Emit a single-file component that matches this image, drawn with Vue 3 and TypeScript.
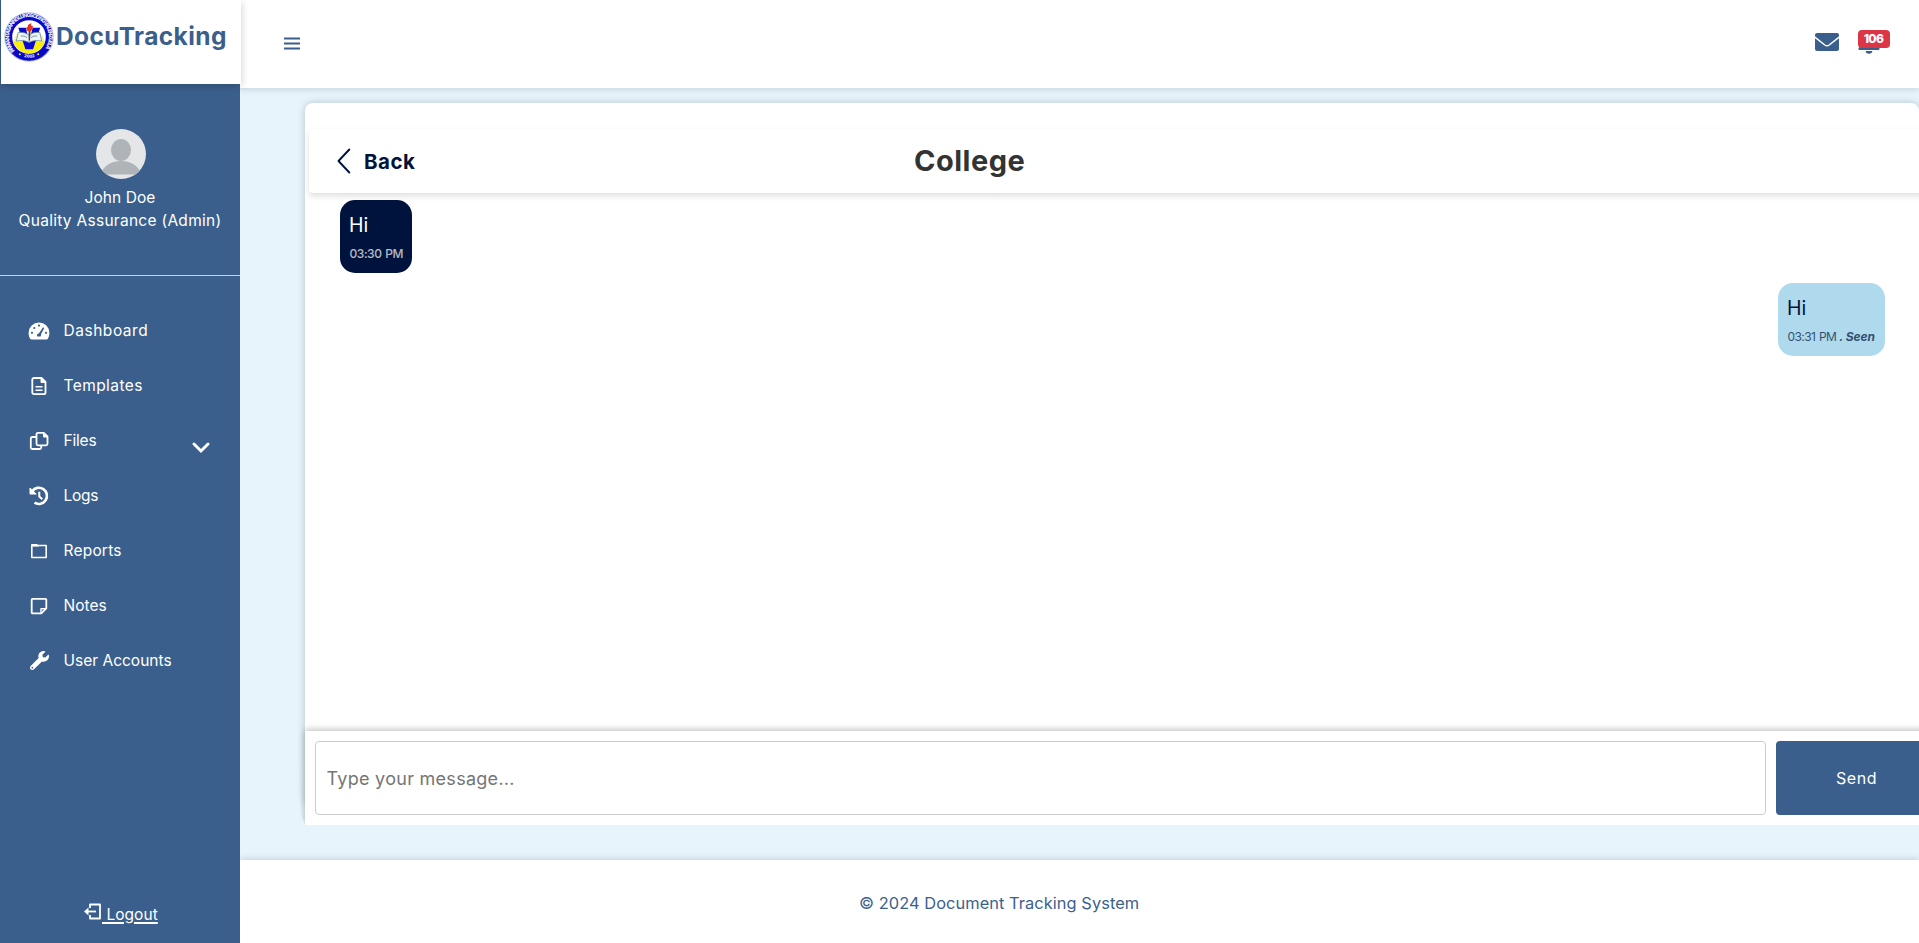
<script setup lang="ts">
import { ref } from 'vue'

interface MenuItem {
  label: string
  icon: string
  spacing: string
  expandable?: boolean
}

interface Message {
  id: number
  text: string
  time: string
  mine: boolean
  seen?: boolean
}

const menu: MenuItem[] = [
  { label: 'Dashboard', icon: 'gauge', spacing: '0.53px' },
  { label: 'Templates', icon: 'file', spacing: '0.43px' },
  { label: 'Files', icon: 'copy', spacing: '-0.2px', expandable: true },
  { label: 'Logs', icon: 'history', spacing: '-0.27px' },
  { label: 'Reports', icon: 'folder', spacing: '0.2px' },
  { label: 'Notes', icon: 'note', spacing: '0px' },
  { label: 'User Accounts', icon: 'wrench', spacing: '0px' },
]

const messages: Message[] = [
  { id: 1, text: 'Hi', time: '03:30 PM', mine: false },
  { id: 2, text: 'Hi', time: '03:31 PM', mine: true, seen: true },
]

const draft = ref('')
const unread = ref(106)
</script>

<template>
  <div class="app">
    <aside class="sidebar">
      <div class="brand">
        <svg class="seal" viewBox="0 0 98 98">
          <defs>
            <path id="ringTop" d="M21 76A39 39 0 1 1 77 76" />
            <path id="ringBottom" d="M30 85A43 43 0 0 0 68 85" />
          </defs>
          <circle cx="49" cy="49" r="48.5" fill="#b9bccb" />
          <circle cx="49" cy="49" r="46.5" fill="#0a08c8" />
          <circle cx="49" cy="49" r="33" fill="#fff" />
          <path d="M18 57h62a32 32 0 0 1-62 0z" fill="#f7ee10" />
          <path d="M18 57l8-16 10 4-4 14zM80 57l-8-16-10 4 4 14z" fill="#f6f0a0" />
          <path d="M28 31h15l6 29 7-29h15L57 73H42z" fill="#0a0ad2" />
          <path d="M28 40q12-2 21 5 9-7 21-5l4 17q-16-3-25 3-9-6-25-3z" fill="#eef4f6" stroke="#5f8294" stroke-width="1.5" />
          <path d="M49 45v15M33 47q7-1 12 3M65 47q-7-1-12 3" fill="none" stroke="#6f8f9d" stroke-width="1.8" />
          <path d="M48 36l4 0-1 20h-2z" fill="#554038" />
          <path d="M46 37q-5-5 1-9-1-4 7-6-3 5 3 6-1 6-4 9z" fill="#e5341c" />
          <text class="ring-text"><textPath href="#ringTop" textLength="176">PAMANTASAN NG LUNGSOD NG VALENZUELA</textPath></text>
          <text class="ring-year"><textPath href="#ringBottom" startOffset="10">2002</textPath></text>
          <circle cx="31" cy="83" r="2" fill="#f4ec50" />
          <circle cx="67" cy="83" r="2" fill="#f4ec50" />
        </svg>
        <span class="brand-name">DocuTracking</span>
      </div>

      <div class="profile">
        <svg class="avatar" viewBox="0 0 50 50">
          <defs><clipPath id="avatarClip"><circle cx="25" cy="25" r="25" /></clipPath></defs>
          <g clip-path="url(#avatarClip)">
            <rect width="50" height="50" fill="#e4e6e8" />
            <ellipse cx="25" cy="21" rx="10" ry="11" fill="#aeb4b8" />
            <path d="M4 45.500C8 36 16 32 25 32s17 4 21 13.500z" fill="#aeb4b8" />
          </g>
        </svg>
        <div class="name">John Doe</div>
        <div class="role">Quality Assurance (Admin)</div>
      </div>

      <nav class="menu">
        <a v-for="item in menu" :key="item.label" class="menu-item">
          <svg v-if="item.icon === 'gauge'" class="icon" viewBox="0 0 24 24">
            <path d="M12 3.500A10.400 10.400 0 0 0 1.600 14c0 2 .5 3.900 1.400 5.500.3.600.9.900 1.600.900h14.800c.7 0 1.300-.3 1.600-.9a11 11 0 0 0 1.400-5.500A10.400 10.400 0 0 0 12 3.500z" fill="#fff" />
            <g class="cut">
              <circle cx="12" cy="6.600" r="1.100" /><circle cx="7.300" cy="9" r="1.100" />
              <circle cx="5" cy="13.800" r="1.100" /><circle cx="19" cy="13.800" r="1.100" />
              <path d="M16 8.200l1.300.9-3.300 6.200c.2 1 0 1.700-.5 2.200h-3.300c-.6-1.500.1-3 1.800-3.200z" />
            </g>
          </svg>
          <svg v-else-if="item.icon === 'file'" class="icon line" viewBox="0 0 24 24">
            <path d="M7 4h7.500l4 4v10.500a1.700 1.700 0 0 1-1.700 1.700H7a1.700 1.700 0 0 1-1.700-1.700V5.700A1.700 1.700 0 0 1 7 4z" />
            <path d="M14 4v4.500h4.500z" fill="#fff" stroke-width="1" />
            <path d="M8.500 12.700h7M8.500 16.300h7" stroke-width="1.600" />
          </svg>
          <svg v-else-if="item.icon === 'copy'" class="icon line" viewBox="0 0 24 24">
            <path d="M11 3.800h5.800l3.700 3.700v7.300a1.500 1.500 0 0 1-1.500 1.500h-8a1.500 1.500 0 0 1-1.500-1.500V5.300A1.500 1.500 0 0 1 11 3.800z" />
            <path d="M16.500 4v4h4z" fill="#fff" stroke-width="1" />
            <path d="M9.500 8H5.300a1.500 1.500 0 0 0-1.500 1.500v9A1.500 1.500 0 0 0 5.300 20h7.400a1.500 1.500 0 0 0 1.500-1.500v-2" />
          </svg>
          <svg v-else-if="item.icon === 'history'" class="icon line" viewBox="0 0 24 24">
            <path d="M5.200 7.200A8.100 8.100 0 1 1 7.500 18.700" stroke-width="2.600" />
            <path d="M3 4v6h6.200z" fill="#fff" stroke-width="1" />
            <path d="M12.300 7.800v4.600l3 2.800" stroke-width="2" />
          </svg>
          <svg v-else-if="item.icon === 'folder'" class="icon line" viewBox="0 0 24 24">
            <path d="M4.800 6.500h14.400v12H4.800z" stroke-width="1.600" />
            <path d="M4.800 7V5.700h4.700l1.800 1.200H4.800z" fill="#fff" stroke-width="1.400" />
          </svg>
          <svg v-else-if="item.icon === 'note'" class="icon line" viewBox="0 0 24 24">
            <path d="M5.500 4.800h13a.8.8 0 0 1 .8.800v8.700l-5 5H5.500a.8.8 0 0 1-.8-.8V5.600a.8.8 0 0 1 .8-.8z" />
            <path d="M14 19v-4.300h5" stroke-width="1.400" />
          </svg>
          <svg v-else class="icon wrench" viewBox="0 0 512 512">
            <path fill="#fff" d="M507.730 109.100c-2.240-9.030-13.540-12.090-20.120-5.510l-74.360 74.360-67.880-11.310-11.310-67.880 74.360-74.360c6.620-6.620 3.430-17.900-5.660-20.160-47.380-11.740-99.550.91-136.580 37.930-39.640 39.640-50.550 97.100-34.050 147.200L18.740 402.760c-24.990 24.990-24.990 65.510 0 90.500 24.990 24.990 65.510 24.990 90.500 0l213.210-213.210c50.120 16.710 107.470 5.680 147.370-34.220 37.070-37.070 49.700-89.320 37.910-136.730zM64 472c-13.250 0-24-10.750-24-24 0-13.260 10.750-24 24-24s24 10.740 24 24c0 13.250-10.750 24-24 24z" />
          </svg>
          <span class="label" :style="{ letterSpacing: item.spacing }">{{ item.label }}</span>
          <svg v-if="item.expandable" class="chevron" viewBox="0 0 18 12">
            <path d="M2 2l7 7 7-7" />
          </svg>
        </a>
      </nav>

      <a class="logout">
        <svg class="logout-icon" viewBox="0 0 18 18">
          <path d="M6 5V1.500h10v14H6V12" fill="none" stroke="#fff" stroke-width="1.800" stroke-linejoin="round" />
          <path d="M4 8.500h8" stroke="#fff" stroke-width="1.800" />
          <path d="M0 8.500l4.500-4v8z" fill="#fff" />
        </svg>
        <span class="logout-text">&nbsp;Logout</span>
      </a>
    </aside>

    <div class="page">
      <header class="topbar">
        <svg class="bars" viewBox="0 0 16 13">
          <path d="M0 1.500h16M0 6.500h16M0 11.500h16" stroke="#3b5f8c" stroke-width="2" />
        </svg>
        <div class="tools">
          <svg class="mail" viewBox="0 0 24 18">
            <rect width="24" height="18" rx="2" fill="#3b5f8c" />
            <path d="M-1 3.500L9.800 12q2.200 1.600 4.400 0L25 3.500" fill="none" stroke="#fff" stroke-width="1.500" />
          </svg>
          <div class="bell-wrap">
            <svg class="bell" viewBox="0 0 22 25">
              <path d="M11 0v2C6 3 4 6.500 4 11c0 4-1.500 6-3 7.500-1.200 1.200-.5 2.500 1 2.500h18c1.500 0 2.200-1.300 1-2.500-1.500-1.500-3-3.500-3-7.500 0-4.500-2-8-7-9z" fill="#3b5f8c" />
              <path d="M7.700 22h6.600a3.300 2.800 0 0 1-6.600 0z" fill="#3b5f8c" />
            </svg>
            <span class="badge">{{ unread }}</span>
          </div>
        </div>
      </header>

      <main class="content">
        <section class="card">
          <div class="chat-head">
            <a class="back">
              <svg class="back-icon" viewBox="0 0 14 26">
                <path d="M12.300 1.500L1.500 13l10.800 11.500" />
              </svg>
              <span>Back</span>
            </a>
            <h2 class="title">College</h2>
          </div>

          <div class="messages">
            <div v-for="m in messages" :key="m.id" class="bubble" :class="{ mine: m.mine }">
              <div class="text">{{ m.text }}</div>
              <div class="meta"><span class="time">{{ m.time }}</span><span v-if="m.seen" class="seen">. Seen</span></div>
            </div>
          </div>

          <form class="composer" @submit.prevent>
            <input v-model="draft" class="field" type="text" placeholder="Type your message..." />
            <button class="send" type="submit">Send</button>
          </form>
        </section>
      </main>

      <footer class="footer">© 2024 Document Tracking System</footer>
    </div>
  </div>
</template>

<style>
body {
  margin: 0;
  overflow: hidden;
}
</style>

<style scoped>
.app {
  display: grid;
  grid-template-columns: 240px minmax(0, 1fr);
  height: 943px;
  overflow: hidden;
  font-family: Inter, "Liberation Sans", sans-serif;
  background: #e7f4fc;
}

.app * {
  box-sizing: border-box;
}

svg {
  display: block;
  flex: none;
}

/* Sidebar */
.sidebar {
  position: relative;
  z-index: 2;
  display: flex;
  flex-direction: column;
  background: #3b5f8c;
  color: #fff;
  font-size: 15.5px;
}

.brand {
  display: flex;
  align-items: flex-start;
  width: 240px;
  height: 84px;
  margin-left: 1px;
  padding: 12px 0 0 3px;
  background: #fff;
  box-shadow: 0 2px 8px rgba(0, 0, 0, 0.2);
}

.seal {
  width: 50px;
  height: 50px;
}

.ring-text,
.ring-year {
  fill: #f2f2ff;
  font: 800 10.5px Inter, sans-serif;
}

.ring-year {
  font-size: 8px;
}

.brand-name {
  margin-left: 2px;
  color: #3b5f8c;
  font-size: 24.5px;
  font-weight: 700;
  line-height: 49px;
  letter-spacing: 0.4px;
}

.profile {
  display: flex;
  flex-direction: column;
  align-items: center;
  width: 240px;
  height: 192px;
  padding-top: 45px;
  border-bottom: 1px solid #c8d0dc;
  line-height: 23px;
  white-space: nowrap;
}

.avatar {
  width: 50px;
  height: 50px;
  margin: 0 0 7px 2px;
}

.name {
  letter-spacing: 0.06px;
}

.role {
  letter-spacing: 0.28px;
}

.menu {
  flex: 1;
  padding-top: 27px;
}

.menu-item {
  display: flex;
  align-items: center;
  height: 55px;
  padding: 0 30px 0 27px;
}

.icon {
  width: 24px;
  height: 24px;
}

.icon.line {
  fill: none;
  stroke: #fff;
  stroke-width: 1.8;
  stroke-linejoin: round;
}

.icon.wrench {
  width: 19px;
  height: 19px;
  margin: 0 2px 0 3px;
}

.cut {
  fill: #3b5f8c;
}

.label {
  margin-left: 12.5px;
  line-height: 23px;
}

.chevron {
  width: 18px;
  height: 12px;
  margin: 14px 0 0 auto;
  fill: none;
  stroke: #fff;
  stroke-width: 2.9;
  stroke-linecap: round;
}

.logout {
  display: flex;
  align-items: flex-start;
  height: 41px;
  padding-left: 84px;
}

.logout-icon {
  width: 18px;
  height: 18px;
  margin-top: 1px;
}

.logout-text {
  line-height: 25px;
  letter-spacing: 0.05px;
  text-decoration: underline;
  text-decoration-thickness: 1.5px;
  text-underline-offset: 2px;
}

/* Top bar */
.page {
  display: flex;
  flex-direction: column;
  min-width: 0;
}

.topbar {
  position: relative;
  z-index: 1;
  display: flex;
  justify-content: space-between;
  height: 88px;
  padding: 30px 29px 0 44px;
  background: #fff;
  box-shadow: 0 2px 6px rgba(0, 0, 0, 0.12);
}

.bars {
  width: 16px;
  height: 13px;
  margin-top: 7px;
}

.tools {
  display: flex;
  align-items: flex-start;
  gap: 20px;
}

.mail {
  width: 24px;
  height: 18px;
  margin-top: 3px;
}

.bell-wrap {
  position: relative;
  width: 31px;
}

.bell {
  width: 22px;
  height: 25px;
  margin: -1px 0 0 -1px;
}

.badge {
  position: absolute;
  top: 0;
  left: -1px;
  width: 32px;
  height: 18px;
  padding-right: 1px;
  border-radius: 4px;
  background: #dc3545;
  color: #fff;
  font-size: 12px;
  font-weight: 800;
  line-height: 17px;
  letter-spacing: -0.6px;
  text-align: center;
}

/* Chat */
.content {
  flex: 1;
  padding: 15px 0 0 65px;
  overflow: hidden;
}

.card {
  display: flex;
  flex-direction: column;
  width: 1614px;
  height: 704px;
  padding-top: 26px;
  border-radius: 8px;
  background: #fff;
  box-shadow: 0 0 8px rgba(0, 0, 0, 0.2);
}

.chat-head {
  display: grid;
  grid-template-columns: 570px auto;
  flex: none;
  align-items: center;
  justify-content: start;
  width: 1640px;
  height: 64px;
  margin-left: 4px;
  padding-left: 28px;
  border-radius: 4px;
  background: #fff;
  box-shadow: 0 3px 6px rgba(0, 0, 0, 0.13);
}

.back {
  display: flex;
  align-items: center;
  color: #00133d;
  font-size: 20.5px;
  font-weight: 700;
  letter-spacing: 0.5px;
}

.back-icon {
  width: 14px;
  height: 26px;
  margin-right: 13px;
  fill: none;
  stroke: #00133d;
  stroke-width: 1.9;
  stroke-linecap: round;
  stroke-linejoin: round;
}

.title {
  margin: 0 0 0 7px;
  color: #333;
  font-size: 29px;
  font-weight: 700;
  line-height: 34px;
  letter-spacing: 0.5px;
}

.messages {
  display: flex;
  flex: none;
  flex-direction: column;
  align-items: flex-start;
  gap: 10px;
  height: 538px;
  padding: 7px 34px 0 35px;
}

.bubble {
  width: 72px;
  height: 73px;
  padding: 10px 0 0 9px;
  border-radius: 15px;
  background: #00133d;
  color: #fff;
  font-size: 19.5px;
  line-height: 30px;
  white-space: nowrap;
}

.bubble.mine {
  align-self: flex-end;
  width: 107px;
  background: #afd9ec;
  color: #00133d;
}

.text {
  height: 34px;
}

.meta {
  padding-left: 0.5px;
  font-size: 12px;
  line-height: 20px;
  opacity: 0.7;
}

.time {
  font-weight: 500;
  letter-spacing: -0.44px;
  word-spacing: 1px;
}

.mine .time {
  font-weight: 400;
  letter-spacing: -0.6px;
}

.seen {
  margin-left: 3px;
  font-style: italic;
  font-weight: 700;
  letter-spacing: -0.07px;
}

.composer {
  display: flex;
  flex: none;
  gap: 10px;
  width: 1641px;
  height: 94px;
  padding: 10px;
  background: #fff;
  box-shadow: 0 -1px 7px rgba(0, 0, 0, 0.28);
  clip-path: polygon(-10px -10px, 100% -10px, 100% 100%, 0 100%, -4px 90%);
}

.field {
  width: 1451px;
  height: 74px;
  padding: 0 10.5px;
  border: 1px solid #ccc;
  border-radius: 4px;
  outline: none;
  background: #fff;
  font: 18px Inter, "Liberation Sans", sans-serif;
  letter-spacing: 0.28px;
}

.field::placeholder {
  color: #757575;
}

.send {
  width: 160px;
  height: 74px;
  padding: 0 0 0 1px;
  border: 0;
  border-radius: 4px;
  background: #3b5f8c;
  color: #fff;
  font: 16px Inter, "Liberation Sans", sans-serif;
  letter-spacing: 0.5px;
}

.footer {
  position: relative;
  height: 83px;
  padding: 31px 0 0 619px;
  background: #fff;
  box-shadow: 0 -2px 6px rgba(0, 0, 0, 0.12);
  color: #3b5f8c;
  font-size: 16.4px;
  line-height: 24px;
  letter-spacing: 0.06px;
}
</style>
